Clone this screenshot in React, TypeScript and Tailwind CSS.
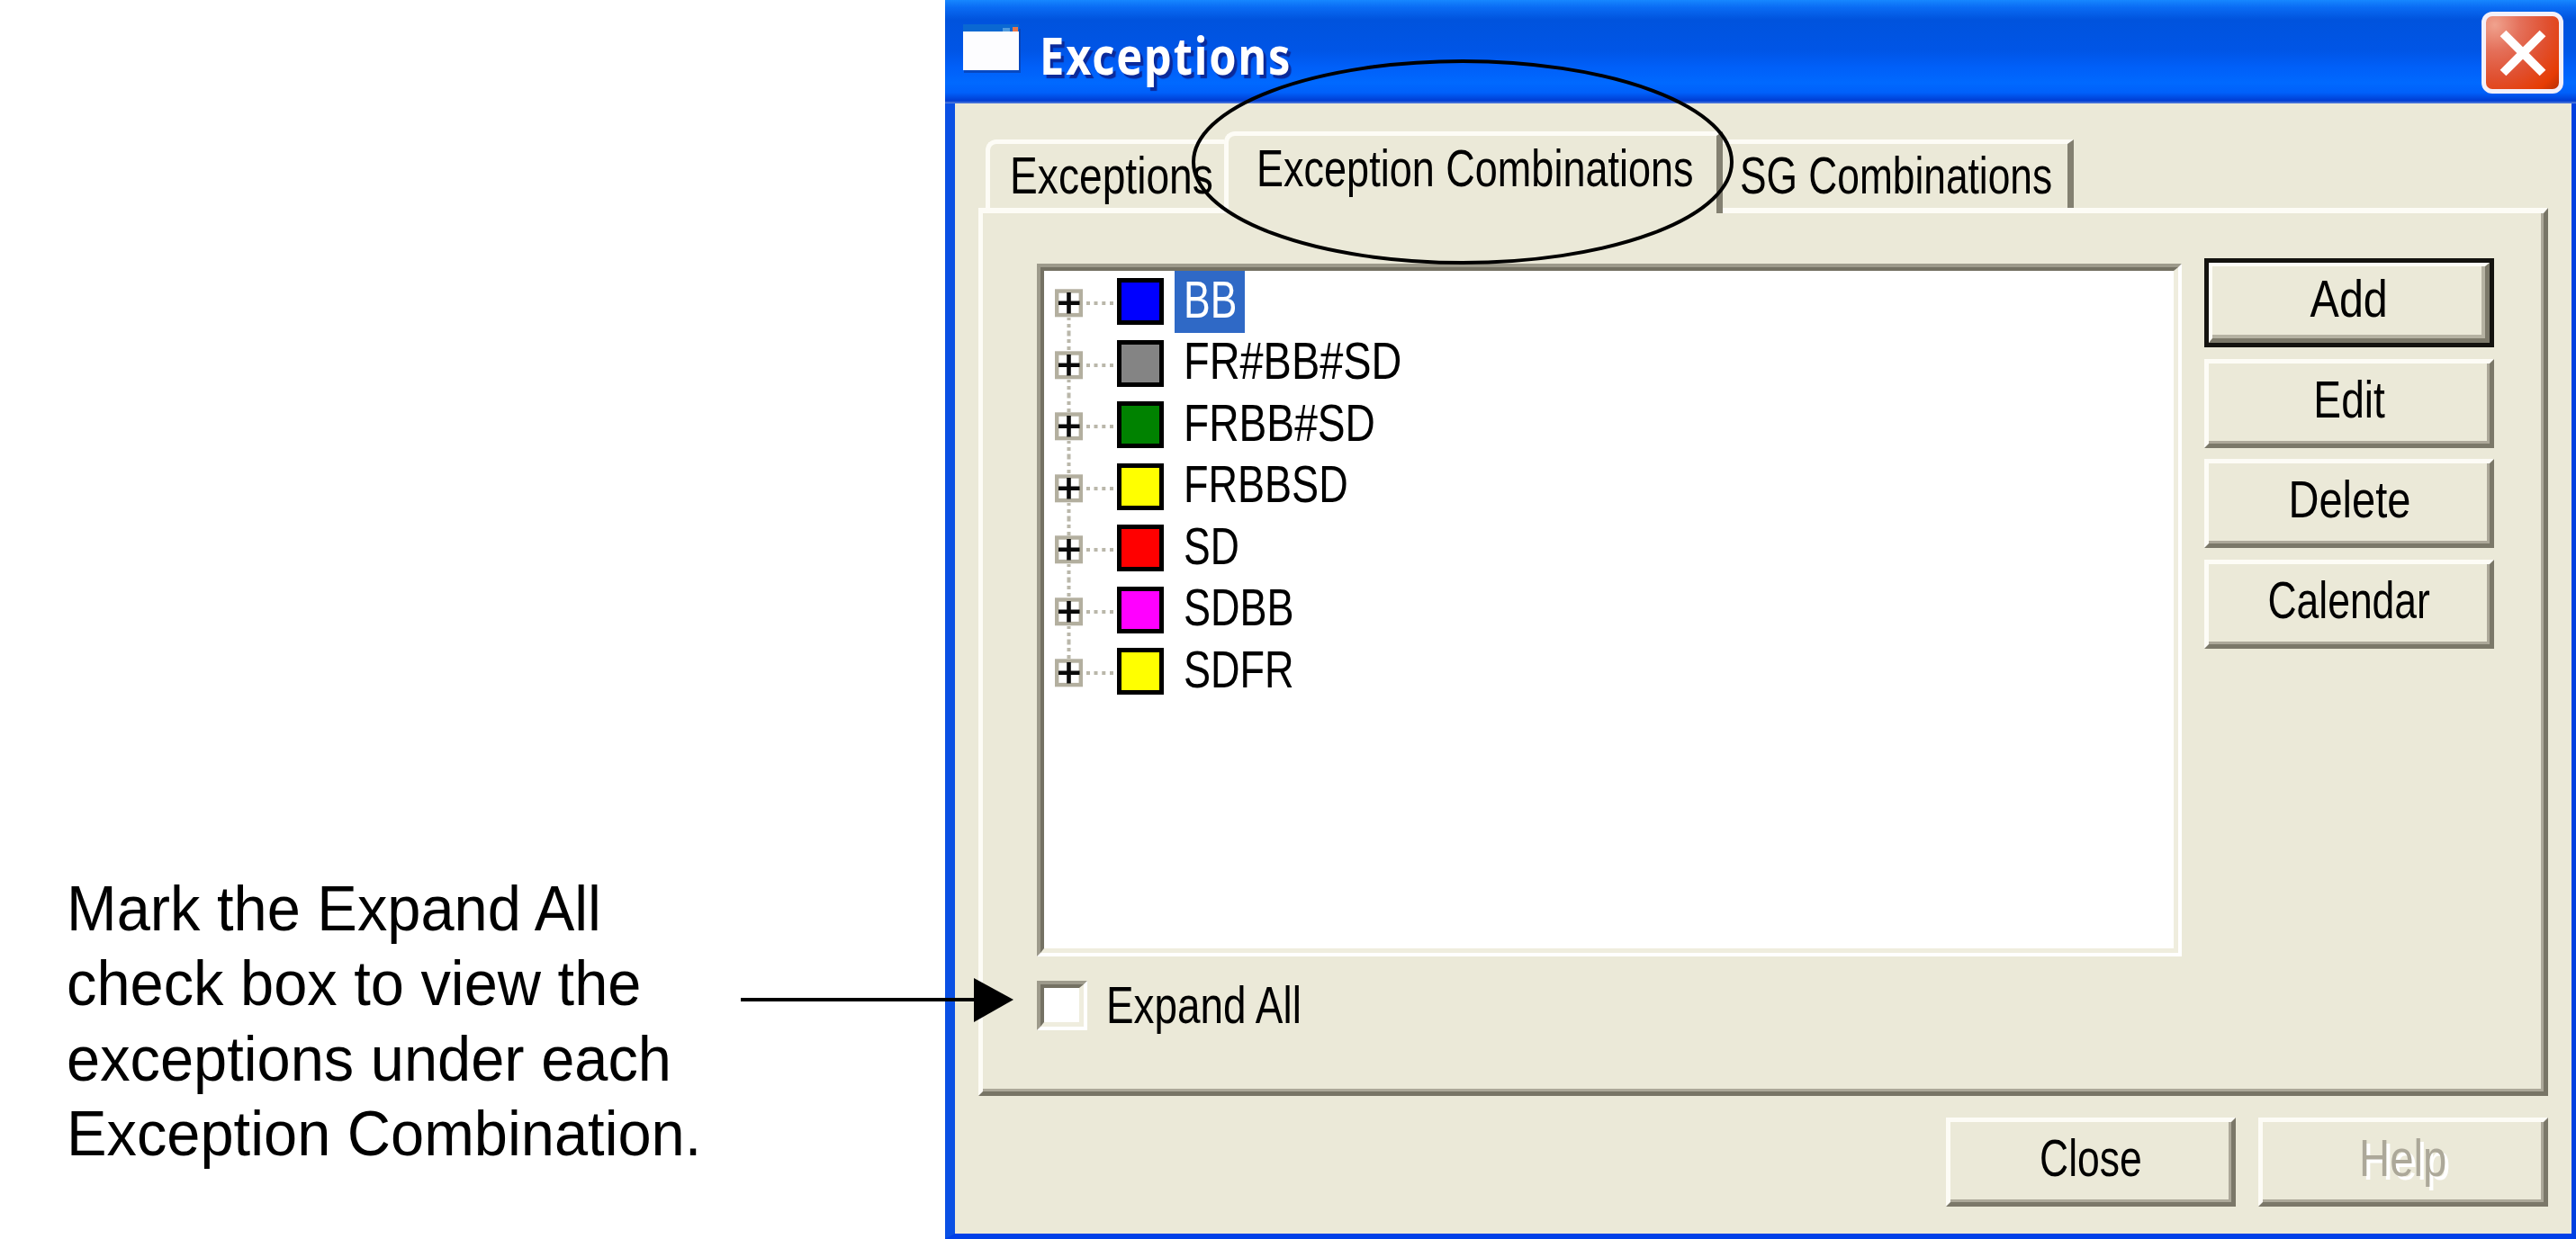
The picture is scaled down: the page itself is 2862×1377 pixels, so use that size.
import { useState, type ReactNode } from "react";
import clsx from "clsx";

type Combination = {
  name: string;
  color: string;
  stretch: string;
};

const COMBINATIONS: Combination[] = [
  { name: "BB", color: "bg-[#0000ff]", stretch: "scale-x-[0.78]" },
  { name: "FR#BB#SD", color: "bg-[#848484]", stretch: "scale-x-[0.823]" },
  { name: "FRBB#SD", color: "bg-[#008200]", stretch: "scale-x-[0.81]" },
  { name: "FRBBSD", color: "bg-[#ffff00]", stretch: "scale-x-[0.79]" },
  { name: "SD", color: "bg-[#ff0000]", stretch: "scale-x-[0.78]" },
  { name: "SDBB", color: "bg-[#ff00ff]", stretch: "scale-x-[0.79]" },
  { name: "SDFR", color: "bg-[#ffff00]", stretch: "scale-x-[0.79]" },
];

export default function App() {
  return (
    <main className="relative flex h-[1377px] w-[2862px] overflow-hidden bg-white font-['Liberation_Sans',Arial,sans-serif] text-black">
      <aside className="w-[1050px] shrink-0 pt-[969px] pl-[74px]">
        <p className="origin-left scale-x-[0.954] text-[70px] leading-[83.3px] whitespace-nowrap">
          Mark the Expand All
          <br />
          check box to view the
          <br />
          exceptions under each
          <br />
          Exception Combination.
        </p>
      </aside>
      <ExceptionsDialog />
      <Callouts />
    </main>
  );
}

function ExceptionsDialog() {
  const [selected, setSelected] = useState("BB");

  return (
    <section className="flex w-[1812px] shrink-0 flex-col bg-[#0842dd]">
      <TitleBar />
      <div className="flex flex-1 flex-col border-r-[5px] border-b-[6px] border-l-[11px] border-r-[#0040e0] border-b-[#0040e8] border-l-[#0a50e4] bg-[#ebe9d8] px-[26px]">
        <nav className="flex h-[116px] shrink-0 items-end pl-2">
          <button className="flex h-[76px] w-[265px] items-center rounded-tl-[12px] border-t-[5px] border-l-[5px] border-[#fdfcf6] pl-[22px]">
            <Caption className="origin-left scale-x-[0.81]">Exceptions</Caption>
          </button>
          <button className="relative z-10 -mb-[6px] flex h-[91px] w-[554px] items-center rounded-tl-[12px] border-t-[5px] border-r-[7px] border-l-[5px] border-[#fdfcf6] border-r-[#838071] bg-[#ebe9d8] pb-[13px] pl-[31px]">
            <Caption className="origin-left scale-x-[0.79]">Exception Combinations</Caption>
          </button>
          <button className="flex h-[76px] w-[390px] items-center border-t-[5px] border-r-[7px] border-[#fdfcf6] border-r-[#838071] pl-[19px]">
            <Caption className="origin-left scale-x-[0.777]">SG Combinations</Caption>
          </button>
        </nav>

        <div className="h-[987px] shrink-0 border-t-[6px] border-r-[5px] border-b-[5px] border-l-[5px] border-t-[#fdfcf6] border-r-[#787566] border-b-[#787566] border-l-[#fdfcf6] pt-[50px] pl-[60px] shadow-[inset_-3px_-3px_0_#aca899]">
          <div className="flex gap-[25px]">
            <div className="mt-[6px] h-[770px] w-[1272px] border-4 border-t-[#9d9a8b] border-r-white border-b-white border-l-[#9d9a8b]">
              <ul className="h-full border-t-4 border-r-[5px] border-b-[5px] border-l-4 border-t-[#747163] border-r-[#efedde] border-b-[#efedde] border-l-[#747163] bg-white pl-3">
                {COMBINATIONS.map((combination, index) => (
                  <TreeRow
                    key={combination.name}
                    combination={combination}
                    last={index === COMBINATIONS.length - 1}
                    selected={combination.name === selected}
                    onSelect={() => setSelected(combination.name)}
                  />
                ))}
              </ul>
            </div>
            <div className="flex flex-col gap-[12.5px]">
              <button className="h-[99px] w-[322px] border-[5px] border-[#14130f]">
                <span className="flex h-full items-center justify-center border-t-4 border-r-[5px] border-b-[5px] border-l-4 border-t-[#fdfcf6] border-r-[#7b7869] border-b-[#7b7869] border-l-[#fdfcf6] pb-[7px] shadow-[inset_-4px_-4px_0_#b5b2a2]">
                  <Caption className="scale-x-[0.85]">Add</Caption>
                </span>
              </button>
              <PushButton>
                <Caption className="scale-x-[0.81]">Edit</Caption>
              </PushButton>
              <PushButton>
                <Caption className="scale-x-[0.825]">Delete</Caption>
              </PushButton>
              <PushButton>
                <Caption className="scale-x-[0.78]">Calendar</Caption>
              </PushButton>
            </div>
          </div>

          <label className="mt-[26px] flex items-center gap-[21px]">
            <span className="h-[55px] w-14 border-4 border-t-[#9d9a8b] border-r-white border-b-white border-l-[#9d9a8b]">
              <span className="block h-full border-t-4 border-r-[5px] border-b-[5px] border-l-4 border-t-[#747163] border-r-[#efedde] border-b-[#efedde] border-l-[#747163] bg-white" />
            </span>
            <Caption className="origin-left scale-x-[0.805]">Expand All</Caption>
          </label>
        </div>

        <footer className="mt-6 flex justify-end gap-[25px]">
          <PushButton>
            <Caption className="scale-x-[0.78]">Close</Caption>
          </PushButton>
          <PushButton disabled>
            <Caption className="scale-x-[0.83] text-[#aca899] [text-shadow:5px_4px_0_#fff]">Help</Caption>
          </PushButton>
        </footer>
      </div>
    </section>
  );
}

function TitleBar() {
  return (
    <header className="flex h-[115px] shrink-0 justify-between bg-[linear-gradient(180deg,#1687ff_0px,#0a6cf4_8px,#0053dd_22px,#0055e6_56px,#005ff8_74px,#0069ff_92px,#0060fa_103px,#003dd2_112px,#5f86dc_115px)] pr-[14px] pl-5">
      <div className="flex">
        <svg className="mt-[27px] h-[54px] w-[64px]" viewBox="0 0 64 54">
          <rect x="1" y="5" width="63" height="49" fill="#0b3fa8" opacity="0.7" />
          <rect x="0" y="0" width="62" height="9" fill="#0a68d2" />
          <rect x="44" y="4" width="8" height="4" fill="#4f9ade" />
          <rect x="55" y="3" width="6" height="5" fill="#e8764a" />
          <rect x="0" y="8" width="62" height="43" fill="#fdfdff" />
        </svg>
        <h1 className="mt-[21px] ml-[21px] origin-left scale-x-[0.84] font-['Noto_Sans','Open_Sans',sans-serif] text-[58px] leading-[80px] font-bold tracking-[2.2px] text-white [text-shadow:4px_4px_1px_#0b2a9a]">
          Exceptions
        </h1>
      </div>
      <button className="mt-[13px] flex size-[91px] items-center justify-center rounded-[12px] border-[5px] border-[#f3f0fa] bg-[radial-gradient(circle_at_12%_12%,#f0a28e_0%,#e4705a_28%,#e05030_58%,#e63c04_85%,#b83006_100%)]">
        <svg className="size-[52px]" viewBox="0 0 52 52" stroke="#fff" strokeWidth="9.5">
          <path d="M4 4 48 48M48 4 4 48" />
        </svg>
      </button>
    </header>
  );
}

function TreeRow({
  combination,
  last,
  selected,
  onSelect,
}: {
  combination: Combination;
  last: boolean;
  selected: boolean;
  onSelect: () => void;
}) {
  return (
    <li className="flex h-[68.5px] items-center" onClick={onSelect}>
      <svg className="h-[68.5px] w-[69px] overflow-visible" viewBox="0 0 69 68.5">
        <rect x="2.2" y="22.5" width="26.6" height="26.6" fill="#fff" stroke="#b3af9f" strokeWidth="4.4" />
        <path d="M4 35.8H27.5M15.5 24V47.5" stroke="#0a0a0a" strokeWidth="4.6" />
        <g fill="#bab7aa">
          <path d="M35 34h4v4h-4zM43.5 34h4v4h-4zM52.3 34h4v4h-4zM61 34h4v4h-4z" />
          {last ? null : (
            <path d="M13.5 52h4v3h-4zM13.5 59h4v4h-4zM13.5 66.5h4v6h-4zM13.5 76h4v4h-4zM13.5 84h4v4h-4z" />
          )}
        </g>
      </svg>
      <span className={clsx("size-[52px] border-[5px] border-black", combination.color)} />
      <span
        className={clsx(
          "ml-3 flex h-full items-center pb-1 pl-[10px]",
          selected && "w-[78px] bg-[#2f69c6] text-white",
        )}
      >
        <Caption className={clsx("origin-left", combination.stretch)}>{combination.name}</Caption>
      </span>
    </li>
  );
}

function PushButton({ children, disabled }: { children: ReactNode; disabled?: boolean }) {
  return (
    <button
      disabled={disabled}
      className="flex h-[99px] w-[322px] items-center justify-center border-[5px] border-t-[#fdfcf6] border-r-[#7b7869] border-b-[#7b7869] border-l-[#fdfcf6] pb-2 shadow-[inset_-3px_-3px_0_#aca899]"
    >
      {children}
    </button>
  );
}

function Caption({ children, className }: { children: ReactNode; className?: string }) {
  return (
    <span className={clsx("inline-block text-[57px] leading-none whitespace-nowrap", className)}>
      {children}
    </span>
  );
}

// Ring around the active tab and the arrow to the check box, drawn over the dialog.
function Callouts() {
  return (
    <svg
      className="pointer-events-none absolute inset-0 z-20"
      width="2862"
      height="1377"
      viewBox="0 0 2862 1377"
    >
      <ellipse cx="1625" cy="180" rx="299" ry="112" fill="none" stroke="#000" strokeWidth="4" />
      <path d="M823 1111H1085" stroke="#000" strokeWidth="4" />
      <path d="M1082 1087V1136L1126 1111Z" />
    </svg>
  );
}
